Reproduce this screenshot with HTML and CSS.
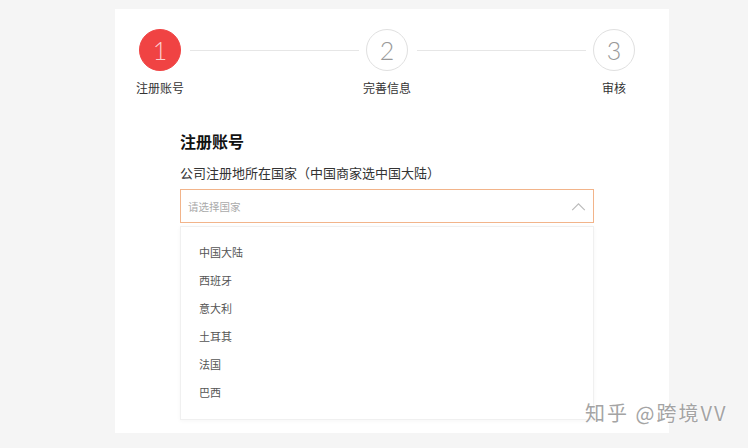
FILE: index.html
```html
<!DOCTYPE html>
<html lang="zh-CN">
<head>
    <meta charset="UTF-8">
    <meta name="viewport" content="width=device-width, initial-scale=1.0">
    <title>注册账号</title>
    <link rel="stylesheet" href="styles.css">
</head>
<body>
    <div class="card">
        <!-- 步骤条 -->
        <div class="steps">
            <div class="step active">
                <div class="circle">1</div>
                <div class="step-label">注册账号</div>
            </div>
            <div class="step-line"></div>
            <div class="step">
                <div class="circle">2</div>
                <div class="step-label">完善信息</div>
            </div>
            <div class="step-line"></div>
            <div class="step">
                <div class="circle">3</div>
                <div class="step-label">审核</div>
            </div>
        </div>

        <div class="form">
            <h2>注册账号</h2>
            <div class="field-label">公司注册地所在国家（中国商家选中国大陆）</div>
            <div class="select">
                <span class="placeholder">请选择国家</span>
                <svg class="arrow" viewBox="0 0 16 10" fill="none" stroke="currentColor">
                    <path d="M1 9l7-7 7 7" stroke-width="1.3" />
                </svg>
            </div>
            <ul class="options">
                <li>中国大陆</li>
                <li>西班牙</li>
                <li>意大利</li>
                <li>土耳其</li>
                <li>法国</li>
                <li>巴西</li>
            </ul>
        </div>
    </div>

    <div class="watermark">知乎 @跨境VV</div>
</body>
</html>
```

FILE: styles.css
```css
body, html {
    margin: 0;
    height: 100%;
    background-color: #f5f5f5;
    font-family: "Noto Sans CJK SC", "Noto Sans", sans-serif;
    color: #333;
}

.card {
    margin: 9px 0 0 115px;
    width: 554px;
    height: 424px;
    background-color: #fff;
    padding-top: 20px;
    box-sizing: border-box;
}

.steps {
    display: flex;
    align-items: flex-start;
    padding: 0 34px 0 24px;
}

.step {
    width: 42px;
    display: flex;
    flex-direction: column;
    align-items: center;
}

.circle {
    width: 42px;
    height: 42px;
    border-radius: 50%;
    border: 1px solid #e0e0e0;
    box-sizing: border-box;
    display: flex;
    justify-content: center;
    align-items: center;
    font-family: "Lato", sans-serif;
    font-weight: 300;
    font-size: 25px;
    color: #999;
}

.step.active .circle {
    background-color: #f04343;
    border-color: #f04343;
    color: #fcd0d0;
}

.step-label {
    margin-top: 9px;
    font-size: 12px;
    line-height: 16px;
    white-space: nowrap;
    color: #333;
}

.step-line {
    flex: 1;
    height: 1px;
    margin: 21px 7px 0 9px;
    background-color: #e6e6e6;
}

.form {
    margin: 34px 0 0 65px;
    width: 414px;
}

.form h2 {
    margin: 0;
    font-size: 16px;
    line-height: 22px;
    font-weight: bold;
    color: #111;
}

.field-label {
    margin-top: 12px;
    font-size: 13px;
    line-height: 18px;
    color: #333;
}

.select {
    margin-top: 7px;
    height: 34px;
    border: 1px solid #f2b48a;
    box-sizing: border-box;
    display: flex;
    align-items: center;
    justify-content: space-between;
    padding: 0 7px 0 7px;
}

.placeholder {
    font-size: 10.5px;
    color: #aaa;
}

.arrow {
    width: 15px;
    height: 9px;
    color: #bbb;
}

.options {
    list-style: none;
    margin: 3px 0 0 0;
    padding: 11px 0 13px 0;
    height: 194px;
    box-sizing: border-box;
    border: 1px solid #f0f0f0;
    box-shadow: 0 1px 4px rgba(0, 0, 0, 0.04);
}

.options li {
    height: 28px;
    line-height: 28px;
    padding-left: 18px;
    font-size: 11px;
    color: #555;
}

.watermark {
    position: absolute;
    left: 585px;
    top: 399px;
    font-size: 20px;
    line-height: 28px;
    letter-spacing: 2px;
    color: #a4a4a4;
    text-shadow: 0 0 2px #fff, 0 0 2px #fff;
}
```
